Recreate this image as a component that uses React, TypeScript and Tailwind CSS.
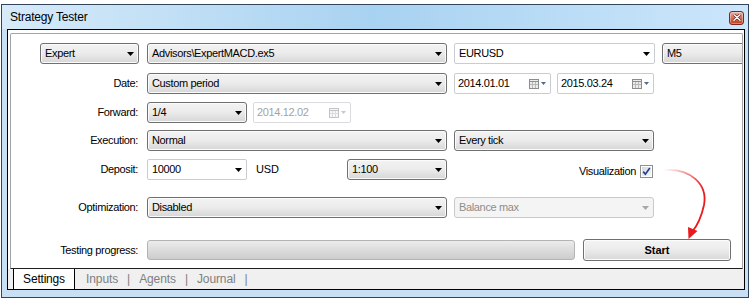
import React from "react";

function Caret({ color = "#000" }: { color?: string }) {
  return (
    <svg width="7" height="4" viewBox="0 0 7 4" className="shrink-0">
      <path d="M0 0H7L3.5 4Z" fill={color} />
    </svg>
  );
}

function Drop({ cls, text }: { cls: string; text: string }) {
  return (
    <div
      className={`h-[21px] shrink-0 flex items-center justify-between pl-[4px] pr-[4px] border border-[#707070] rounded-[3px] bg-linear-to-b from-[#f3f3f3] via-[#ebebeb] to-[#d6d6d6] shadow-[inset_0_0_0_1px_#fbfbfb] ${cls}`}
    >
      <span className="whitespace-nowrap tracking-[-0.35px]">{text}</span>
      <Caret />
    </div>
  );
}

function Combo({ cls, text }: { cls: string; text: string }) {
  return (
    <div
      className={`h-[21px] shrink-0 flex items-center justify-between pl-[4px] pr-[4px] border border-[#c9cdd3] rounded-[2px] bg-white ${cls}`}
    >
      <span className="whitespace-nowrap tracking-[-0.35px]">{text}</span>
      <Caret />
    </div>
  );
}

function CalIcon({ disabled = false }: { disabled?: boolean }) {
  const s = disabled ? "#c4c4c4" : "#8d8d8d";
  const g = disabled ? "#dedede" : "#b9b9b9";
  const a = disabled ? "#c0c8d4" : "#4e6a8f";
  return (
    <svg width="18" height="10" viewBox="0 0 18 10" className="shrink-0">
      <rect x="0.5" y="0.5" width="9" height="9" fill={disabled ? "#f6f6f6" : "#ececec"} stroke={s} />
      <line x1="0.5" y1="2.5" x2="9.5" y2="2.5" stroke={s} />
      <line x1="3.5" y1="3" x2="3.5" y2="9" stroke={g} />
      <line x1="6.5" y1="3" x2="6.5" y2="9" stroke={g} />
      <line x1="1" y1="5.5" x2="9" y2="5.5" stroke={g} />
      <path d="M12 3H17L14.5 6Z" fill={a} />
    </svg>
  );
}

function DatePick({ cls, text, disabled = false }: { cls: string; text: string; disabled?: boolean }) {
  return (
    <div
      className={`h-[21px] shrink-0 flex items-center justify-between pl-[3px] pr-[3px] border rounded-[2px] bg-white ${
        disabled ? "border-[#d9dbde] text-[#a3a3a3]" : "border-[#c9cdd3] text-black"
      } ${cls}`}
    >
      <span className="whitespace-nowrap tracking-[-0.35px]">{text}</span>
      <CalIcon disabled={disabled} />
    </div>
  );
}

function Row({ mt, label, children }: { mt: string; label: string; children: React.ReactNode }) {
  return (
    <div className={`${mt} h-[21px] flex items-center shrink-0`}>
      <div className="w-[127px] shrink-0 text-right tracking-[-0.35px] whitespace-nowrap">{label}</div>
      <div className="ml-[9px] flex items-center">{children}</div>
    </div>
  );
}

function CloseBtn() {
  return (
    <div className="mr-[4px] mt-[1px] w-[15px] h-[14px] rounded-[3px] border border-[#7a2a1c] bg-linear-to-b from-[#eab1a3] via-[#d96a50] to-[#c23a1c] flex items-center justify-center shadow-[inset_0_0_0_1px_rgba(255,255,255,0.35)]">
      <svg width="8" height="7" viewBox="0 0 8 7">
        <path d="M1 0.8L7 6.2M7 0.8L1 6.2" stroke="#5a1a10" strokeWidth="2.6" strokeLinecap="round" />
        <path d="M1 0.8L7 6.2M7 0.8L1 6.2" stroke="#ffffff" strokeWidth="1.5" strokeLinecap="round" />
      </svg>
    </div>
  );
}

function Checkbox() {
  return (
    <svg width="13" height="13" viewBox="0 0 13 13" className="shrink-0">
      <defs>
        <linearGradient id="cbg" x1="0" y1="0" x2="1" y2="1">
          <stop offset="0" stopColor="#d8d8d8" />
          <stop offset="1" stopColor="#f7f7f7" />
        </linearGradient>
      </defs>
      <rect x="0.5" y="0.5" width="12" height="12" fill="#fff" stroke="#8e8f8f" />
      <rect x="2" y="2" width="9" height="9" fill="url(#cbg)" />
      <path d="M3.2 6.6L5.4 9.2L9.8 3" fill="none" stroke="#22429a" strokeWidth="1.7" />
    </svg>
  );
}

export default function App() {
  return (
    <div className="relative w-[751px] h-[300px] bg-white pt-[4px] pl-[1px] font-['Liberation_Sans',Arial,sans-serif] text-[11px] text-black overflow-hidden">
      <div className="w-[748px] h-[294px] border border-[#33455a] bg-[#c9dff3] flex flex-col">
        <div className="h-[24px] shrink-0 flex items-center justify-between bg-linear-to-r from-[#d6eaf9] via-[#a8d2f1] to-[#cce6fb]">
          <span className="pl-[8px] text-[12px] tracking-[-0.2px] text-black">Strategy Tester</span>
          <CloseBtn />
        </div>
        <div className="ml-[5px] w-[738px] h-[261px] shrink-0 border border-black bg-white flex flex-col">
          <div className="h-[239px] shrink-0 pt-[3px] pl-[2px] pr-[1px]">
            <div className="h-[236px] border border-[#a3a3a3] border-b-[#1e1e1e] rounded-t-[2px] overflow-hidden flex flex-col">
              <div className="mt-[9px] h-[21px] flex items-center pl-[29px] shrink-0">
                <Drop cls="w-[99px]" text="Expert" />
                <Drop cls="ml-[8px] w-[300px]" text={"Advisors\\ExpertMACD.ex5"} />
                <Combo cls="ml-[7px] w-[201px]" text="EURUSD" />
                <Drop cls="ml-[7px] w-[100px]" text="M5" />
              </div>

              <Row mt="mt-[9px]" label="Date:">
                <Drop cls="w-[300px]" text="Custom period" />
                <DatePick cls="ml-[7px] w-[97px]" text="2014.01.01" />
                <DatePick cls="ml-[6px] w-[97px]" text="2015.03.24" />
              </Row>

              <Row mt="mt-[8px]" label="Forward:">
                <Drop cls="w-[100px]" text="1/4" />
                <DatePick cls="ml-[6px] w-[98px]" text="2014.12.02" disabled />
              </Row>

              <Row mt="mt-[7px]" label="Execution:">
                <Drop cls="w-[300px]" text="Normal" />
                <Drop cls="ml-[7px] w-[200px]" text="Every tick" />
              </Row>

              <Row mt="mt-[8px]" label="Deposit:">
                <Combo cls="w-[100px]" text="10000" />
                <span className="ml-[9px] w-[91px] shrink-0 tracking-[-0.2px]">USD</span>
                <Drop cls="w-[100px]" text="1:100" />
                <div className="w-[206px] shrink-0 flex items-center justify-end pt-[3px]">
                  <span className="tracking-[-0.35px] mr-[4px]">Visualization</span>
                  <Checkbox />
                </div>
              </Row>

              <Row mt="mt-[17px]" label="Optimization:">
                <Drop cls="w-[300px]" text="Disabled" />
                <div className="ml-[7px] w-[200px] h-[21px] shrink-0 flex items-center justify-between pl-[4px] pr-[4px] border border-[#c9c9c9] rounded-[3px] bg-[#f4f4f4] text-[#8d8d8d]">
                  <span className="tracking-[-0.35px]">Balance max</span>
                  <Caret color="#a8a8a8" />
                </div>
              </Row>

              <div className="mt-[21px] h-[22px] flex items-center shrink-0">
                <div className="w-[127px] shrink-0 text-right tracking-[-0.35px] whitespace-nowrap">Testing progress:</div>
                <div className="ml-[9px] w-[428px] h-[20px] shrink-0 border border-[#b4b4b4] rounded-[3px] bg-linear-to-b from-[#ececec] via-[#dcdcdc] to-[#cdcdcd]" />
                <div className="ml-[8px] w-[148px] h-[22px] shrink-0 flex items-center justify-center border border-[#707070] rounded-[3px] bg-linear-to-b from-[#f4f4f4] via-[#ebebeb] to-[#d8d8d8] shadow-[inset_0_0_0_1px_#fcfcfc] font-bold">
                  Start
                </div>
              </div>
            </div>
          </div>
          <div className="h-[20px] shrink-0 bg-[#f0f0f0] flex items-stretch text-[12px]">
            <div className="ml-[5px] w-[62px] bg-white border-x border-black flex items-center justify-center tracking-[-0.2px]">
              Settings
            </div>
            <div className="flex items-center text-[#7f7f7f] ml-[11px] tracking-[-0.1px]">
              <span>Inputs</span>
              <span className="mx-[9px]">|</span>
              <span>Agents</span>
              <span className="mx-[9px]">|</span>
              <span>Journal</span>
              <span className="ml-[9px]">|</span>
            </div>
          </div>
        </div>
      </div>

      <svg className="absolute left-0 top-0 pointer-events-none" width="751" height="300" viewBox="0 0 751 300">
        <defs>
          <linearGradient id="arrowg" gradientUnits="userSpaceOnUse" x1="664" y1="170" x2="702" y2="192">
            <stop offset="0" stopColor="#e81c1c" stopOpacity="0" />
            <stop offset="1" stopColor="#e81c1c" stopOpacity="1" />
          </linearGradient>
        </defs>
        <path
          d="M664 170 C690 168 708 184 704 205 C701 219 697 226 692 232"
          fill="none"
          stroke="url(#arrowg)"
          strokeWidth="1.8"
        />
        <polygon points="688.5,239 697.5,231 688,227" fill="#e81c1c" />
      </svg>
    </div>
  );
}
